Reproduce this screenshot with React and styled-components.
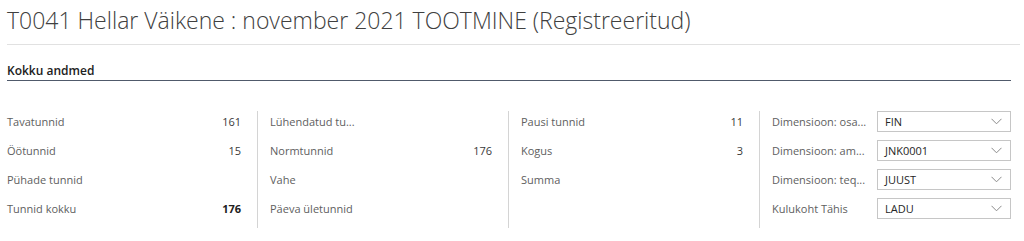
import React from 'react'
import styled, { createGlobalStyle } from 'styled-components';

const GlobalStyle = createGlobalStyle`
  html, body {
    margin: 0;
    padding: 0;
    background: #fff;
  }
  body {
    font-family: "Open Sans", "Noto Sans", sans-serif;
    color: #505050;
  }
`;

const columns = [
  [
    { label: 'Tavatunnid', value: '161' },
    { label: 'Öötunnid', value: '15' },
    { label: 'Pühade tunnid', value: '' },
    { label: 'Tunnid kokku', value: '176', bold: true },
  ],
  [
    { label: 'Lühendatud tu...', value: '' },
    { label: 'Normtunnid', value: '176' },
    { label: 'Vahe', value: '' },
    { label: 'Päeva ületunnid', value: '' },
  ],
  [
    { label: 'Pausi tunnid', value: '11' },
    { label: 'Kogus', value: '3' },
    { label: 'Summa', value: '' },
  ],
];

const dimensions = [
  { label: 'Dimensioon: osa...', value: 'FIN' },
  { label: 'Dimensioon: am...', value: 'JNK0001' },
  { label: 'Dimensioon: teq...', value: 'JUUST' },
  { label: 'Kulukoht Tähis', value: 'LADU' },
];

const Chevron = () => (
  <svg width="11" height="7" viewBox="0 0 11 7" fill="none">
    <path d="M0.5 0.8 L5.5 5.8 L10.5 0.8" stroke="#8a8a8a" strokeWidth="1" />
  </svg>
);

const App = () => {
  return (
    <Page>
      <GlobalStyle />
      <Title>T0041 Hellar Väikene : november 2021 TOOTMINE (Registreeritud)</Title>
      <Section>
        <SectionHeader>Kokku andmed</SectionHeader>
        <Grid>
          {columns.map((col, i) => (
            <Column key={i} first={i === 0}>
              {col.map((row) => (
                <Row key={row.label}>
                  <Label>{row.label}</Label>
                  <Value bold={row.bold}>{row.value}</Value>
                </Row>
              ))}
            </Column>
          ))}
          <Column last>
            {dimensions.map((row) => (
              <Row key={row.label}>
                <Label>{row.label}</Label>
                <Select>
                  <span>{row.value}</span>
                  <Chevron />
                </Select>
              </Row>
            ))}
          </Column>
        </Grid>
      </Section>
    </Page>
  );
};

const Page = styled.div`
  padding: 0 4px 0 7px;
`;

const Title = styled.h1`
  margin: 0;
  padding: 5px 0 9px;
  font-size: 23px;
  font-weight: 300;
  line-height: 30px;
  color: #404040;
  border-bottom: 1px solid #e1e1e1;
  white-space: nowrap;
`;

const Section = styled.div`
  padding-right: 9px;
`;

const SectionHeader = styled.div`
  margin-top: 18px;
  padding-bottom: 2px;
  font-size: 12px;
  font-weight: 600;
  line-height: 15px;
  color: #212121;
  border-bottom: 1px solid #505a6b;
`;

const Grid = styled.div`
  display: grid;
  grid-template-columns: repeat(4, 1fr);
  margin-top: 30px;
`;

const Column = styled.div`
  display: flex;
  flex-direction: column;
  gap: 8px;
  height: 117px;
  padding-left: ${(p) => (p.first ? '0' : '12px')};
  padding-right: ${(p) => (p.last ? '0' : '16px')};
  border-right: ${(p) => (p.last ? 'none' : '1px solid #d4d4d4')};
`;

const Row = styled.div`
  display: flex;
  align-items: center;
  justify-content: space-between;
  height: 21px;
  font-size: 11px;
`;

const Label = styled.span`
  color: #606060;
  white-space: nowrap;
`;

const Value = styled.span`
  color: ${(p) => (p.bold ? '#212121' : '#3a3a3a')};
  font-weight: ${(p) => (p.bold ? 700 : 400)};
`;

const Select = styled.div`
  box-sizing: border-box;
  display: flex;
  align-items: center;
  justify-content: space-between;
  width: 134px;
  height: 21px;
  padding: 0 8px 0 7px;
  border: 1px solid #c6c6c6;
  color: #262626;
  font-size: 11px;
  background: #fff;
`;

export default App
